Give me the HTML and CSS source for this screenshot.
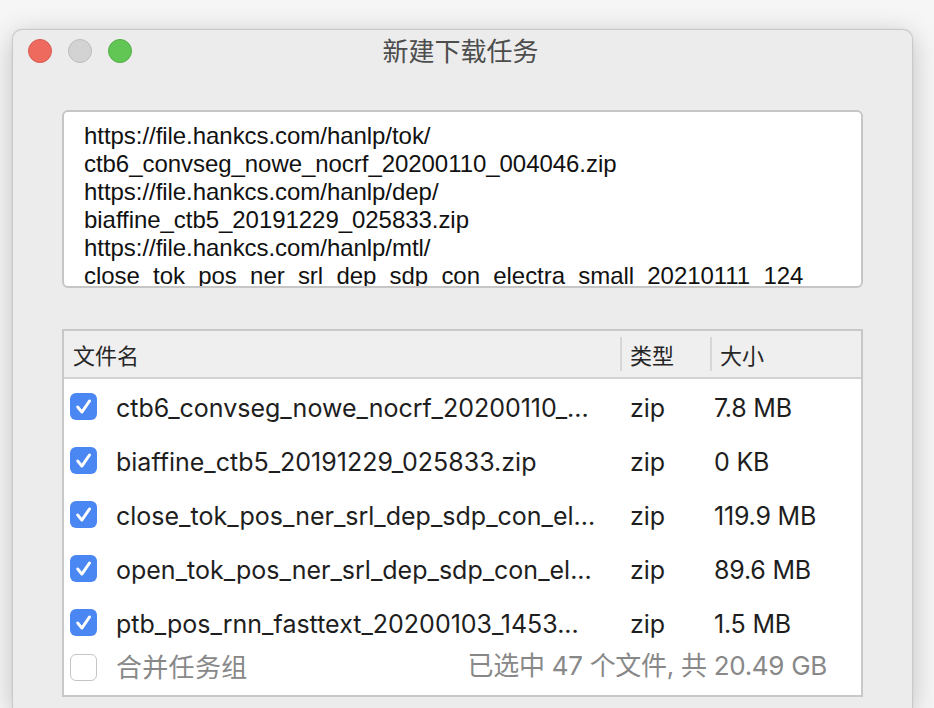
FILE: index.html
```html
<!DOCTYPE html>
<html lang="zh">
<head>
<meta charset="utf-8">
<title>新建下载任务</title>
<link rel="stylesheet" href="styles.css">
</head>
<body>
<div class="window">
  <div class="titlebar">
    <div class="lights">
      <span class="light red"></span>
      <span class="light gray"></span>
      <span class="light green"></span>
    </div>
    <div class="title">新建下载任务</div>
  </div>
  <div class="content">
    <div class="urls">
      <div class="line">https://file.hankcs.com/hanlp/tok/</div>
      <div class="line">ctb6_convseg_nowe_nocrf_20200110_004046.zip</div>
      <div class="line">https://file.hankcs.com/hanlp/dep/</div>
      <div class="line">biaffine_ctb5_20191229_025833.zip</div>
      <div class="line">https://file.hankcs.com/hanlp/mtl/</div>
      <div class="line">close_tok_pos_ner_srl_dep_sdp_con_electra_small_20210111_124</div>
    </div>
    <div class="table">
      <div class="thead">
        <div class="th th-name">文件名</div>
        <div class="th th-type">类型</div>
        <div class="th th-size">大小</div>
      </div>
      <div class="tbody">
        <div class="row">
          <div class="cell-name"><span class="cb checked"><svg viewBox="0 0 28 28"><path d="M8 14.5 L12.3 19.8 L20.3 8.2"/></svg></span><span class="fname">ctb6_convseg_nowe_nocrf_20200110_...</span></div>
          <div class="cell-type">zip</div>
          <div class="cell-size">7.8 MB</div>
        </div>
        <div class="row">
          <div class="cell-name"><span class="cb checked"><svg viewBox="0 0 28 28"><path d="M8 14.5 L12.3 19.8 L20.3 8.2"/></svg></span><span class="fname">biaffine_ctb5_20191229_025833.zip</span></div>
          <div class="cell-type">zip</div>
          <div class="cell-size">0 KB</div>
        </div>
        <div class="row">
          <div class="cell-name"><span class="cb checked"><svg viewBox="0 0 28 28"><path d="M8 14.5 L12.3 19.8 L20.3 8.2"/></svg></span><span class="fname">close_tok_pos_ner_srl_dep_sdp_con_el...</span></div>
          <div class="cell-type">zip</div>
          <div class="cell-size">119.9 MB</div>
        </div>
        <div class="row">
          <div class="cell-name"><span class="cb checked"><svg viewBox="0 0 28 28"><path d="M8 14.5 L12.3 19.8 L20.3 8.2"/></svg></span><span class="fname">open_tok_pos_ner_srl_dep_sdp_con_el...</span></div>
          <div class="cell-type">zip</div>
          <div class="cell-size">89.6 MB</div>
        </div>
        <div class="row">
          <div class="cell-name"><span class="cb checked"><svg viewBox="0 0 28 28"><path d="M8 14.5 L12.3 19.8 L20.3 8.2"/></svg></span><span class="fname">ptb_pos_rnn_fasttext_20200103_1453...</span></div>
          <div class="cell-type">zip</div>
          <div class="cell-size">1.5 MB</div>
        </div>
      </div>
      <div class="tfoot">
        <div class="merge"><span class="cb"></span><span class="merge-label">合并任务组</span></div>
        <div class="summary">已选中 47 个文件, 共 20.49 GB</div>
      </div>
    </div>
  </div>
</div>
</body>
</html>
```

FILE: styles.css
```css
html, body {
  margin: 0;
  padding: 0;
}
body {
  width: 934px;
  height: 708px;
  overflow: hidden;
  background: #f6f6f6;
  padding: 29px 0 0 12px;
  box-sizing: border-box;
  font-family: "Liberation Sans", "Noto Sans CJK SC", sans-serif;
  color: #222;
}
.window {
  width: 901px;
  height: 679px;
  box-sizing: border-box;
  background: #ececec;
  border: 1px solid #c9c9c9;
  border-bottom: none;
  border-radius: 10px 10px 0 0;
  box-shadow: 0 6px 28px rgba(0, 0, 0, 0.22), 0 0 2px rgba(0, 0, 0, 0.08);
}
.titlebar {
  position: relative;
  height: 44px;
  display: flex;
  align-items: flex-start;
}
.lights {
  display: flex;
  gap: 16px;
  padding: 9px 0 0 15px;
}
.light {
  width: 24px;
  height: 24px;
  border-radius: 50%;
  box-sizing: border-box;
}
.light.red { background: #ee6a5f; border: 1px solid #d85a50; }
.light.gray { background: #d3d3d3; border: 1px solid #bdbdbd; }
.light.green { background: #62c654; border: 1px solid #52ad45; }
.title {
  position: absolute;
  left: 0;
  right: 0;
  top: 3px;
  text-align: center;
  font-family: "Noto Sans CJK SC", sans-serif;
  font-size: 26px;
  line-height: 34px;
  color: #4d4d4d;
  padding-right: 4px;
}
.content {
  padding: 36px 49px 0 49px;
  display: flex;
  flex-direction: column;
  gap: 41px;
}
.urls {
  height: 178px;
  box-sizing: border-box;
  background: #fff;
  border: 2px solid #c6c6c6;
  border-radius: 6px;
  padding: 10px 20px 0 20px;
  overflow: hidden;
  font-size: 24px;
  line-height: 28px;
  color: #111;
  letter-spacing: -0.05px;
}
.line {
  white-space: nowrap;
}
.table {
  height: 368px;
  box-sizing: border-box;
  border: 2px solid #c8c8c8;
  background: #fff;
  display: flex;
  flex-direction: column;
}
.thead {
  flex: none;
  height: 46px;
  background: #efefef;
  border-bottom: 2px solid #d2d2d2;
  display: grid;
  grid-template-columns: 556px 90px 1fr;
  align-items: center;
}
.th {
  font-family: "Noto Sans CJK SC", sans-serif;
  font-size: 22px;
  line-height: 34px;
  color: #262626;
  padding-left: 9px;
}
.th-type, .th-size {
  border-left: 2px solid #d6d6d6;
  padding-left: 8px;
}
.tbody {
  flex: none;
  padding-top: 2px;
  display: flex;
  flex-direction: column;
}
.row {
  height: 54px;
  display: grid;
  grid-template-columns: 556px 94px 1fr;
  align-items: center;
  font-family: "Inter", "Liberation Sans", sans-serif;
  font-size: 25px;
  letter-spacing: 0;
  color: #1e1e1e;
}
.cell-name {
  display: flex;
  align-items: center;
  padding-left: 6px;
  gap: 19px;
  overflow: hidden;
  white-space: nowrap;
}
.cell-type {
  padding-left: 10px;
}
.cell-size {
  padding-left: 0;
  letter-spacing: -0.2px;
}
.fname {
  overflow: hidden;
}
.cb {
  flex: none;
  width: 27px;
  height: 27px;
  box-sizing: border-box;
  border-radius: 6px;
  background: #fff;
  border: 1.5px solid #c4c4c4;
  display: inline-flex;
  align-items: center;
  justify-content: center;
  margin-top: -3px;
}
.cb.checked {
  background: #4a87f2;
  border: none;
}
.cb svg {
  width: 27px;
  height: 27px;
  fill: none;
  stroke: #fff;
  stroke-width: 3;
  stroke-linecap: round;
  stroke-linejoin: round;
}
.tfoot {
  flex: none;
  height: 44px;
  box-sizing: border-box;
  display: flex;
  align-items: center;
  justify-content: space-between;
  padding: 0 34px 14px 6px;
  color: #888888;
}
.merge {
  display: flex;
  align-items: center;
  gap: 19px;
}
.merge .cb {
  margin-top: 3px;
}
.merge-label {
  font-family: "Noto Sans CJK SC", sans-serif;
  font-size: 26px;
  line-height: 30px;
  letter-spacing: 0.3px;
}
.summary {
  font-size: 26px;
  line-height: 30px;
  font-family: "Inter", "Noto Sans CJK SC", sans-serif;
  letter-spacing: -0.3px;
}
```
